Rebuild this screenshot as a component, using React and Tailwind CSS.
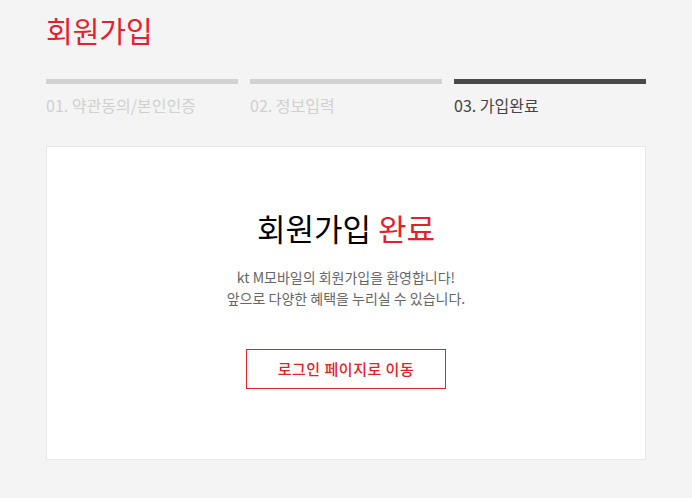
import React from 'react';

const steps = [
  { label: '01. 약관동의/본인인증', active: false },
  { label: '02. 정보입력', active: false },
  { label: '03. 가입완료', active: true },
];

const App = () => {
  return (
    <div
      className="min-h-[498px] bg-[#f4f4f4]"
      style={{ fontFamily: '"Noto Sans CJK KR", "Noto Sans", sans-serif' }}
    >
      <div className="mx-auto w-[600px] pt-[14px] pb-[39px]">
        {/* Title */}
        <h1 className="text-[29px] leading-[32px] text-[#e4212a]">회원가입</h1>

        {/* Steps */}
        <div className="mt-[33px] grid grid-cols-3 gap-3">
          {steps.map((step) => (
            <div key={step.label}>
              <div className={`h-[5px] ${step.active ? 'bg-[#4a4a4a]' : 'bg-[#d2d2d2]'}`} />
              <p
                className={`mt-[11px] text-[16px] leading-[20px] ${
                  step.active ? 'text-[#444444]' : 'text-[#d0d0d0]'
                }`}
              >
                {step.label}
              </p>
            </div>
          ))}
        </div>

        {/* Complete box */}
        <div className="mt-[31px] flex flex-col items-center border border-[#e8e8e8] bg-white pt-[63px] pb-[70px]">
          <h2 className="text-[31px] leading-[36px] text-black">
            회원가입 <span className="text-[#e4212a]">완료</span>
          </h2>
          <p className="mt-[21px] text-center text-[14px] leading-[21px] text-[#666666]">
            kt M모바일의 회원가입을 환영합니다!
            <br />
            앞으로 다양한 혜택을 누리실 수 있습니다.
          </p>
          <button className="mt-[40px] flex h-[40px] w-[200px] items-center justify-center border border-[#e4212a] bg-white text-[15px] font-medium tracking-[0.5px] text-[#e4212a]">
            로그인 페이지로 이동
          </button>
        </div>
      </div>
    </div>
  );
};

export default App;
